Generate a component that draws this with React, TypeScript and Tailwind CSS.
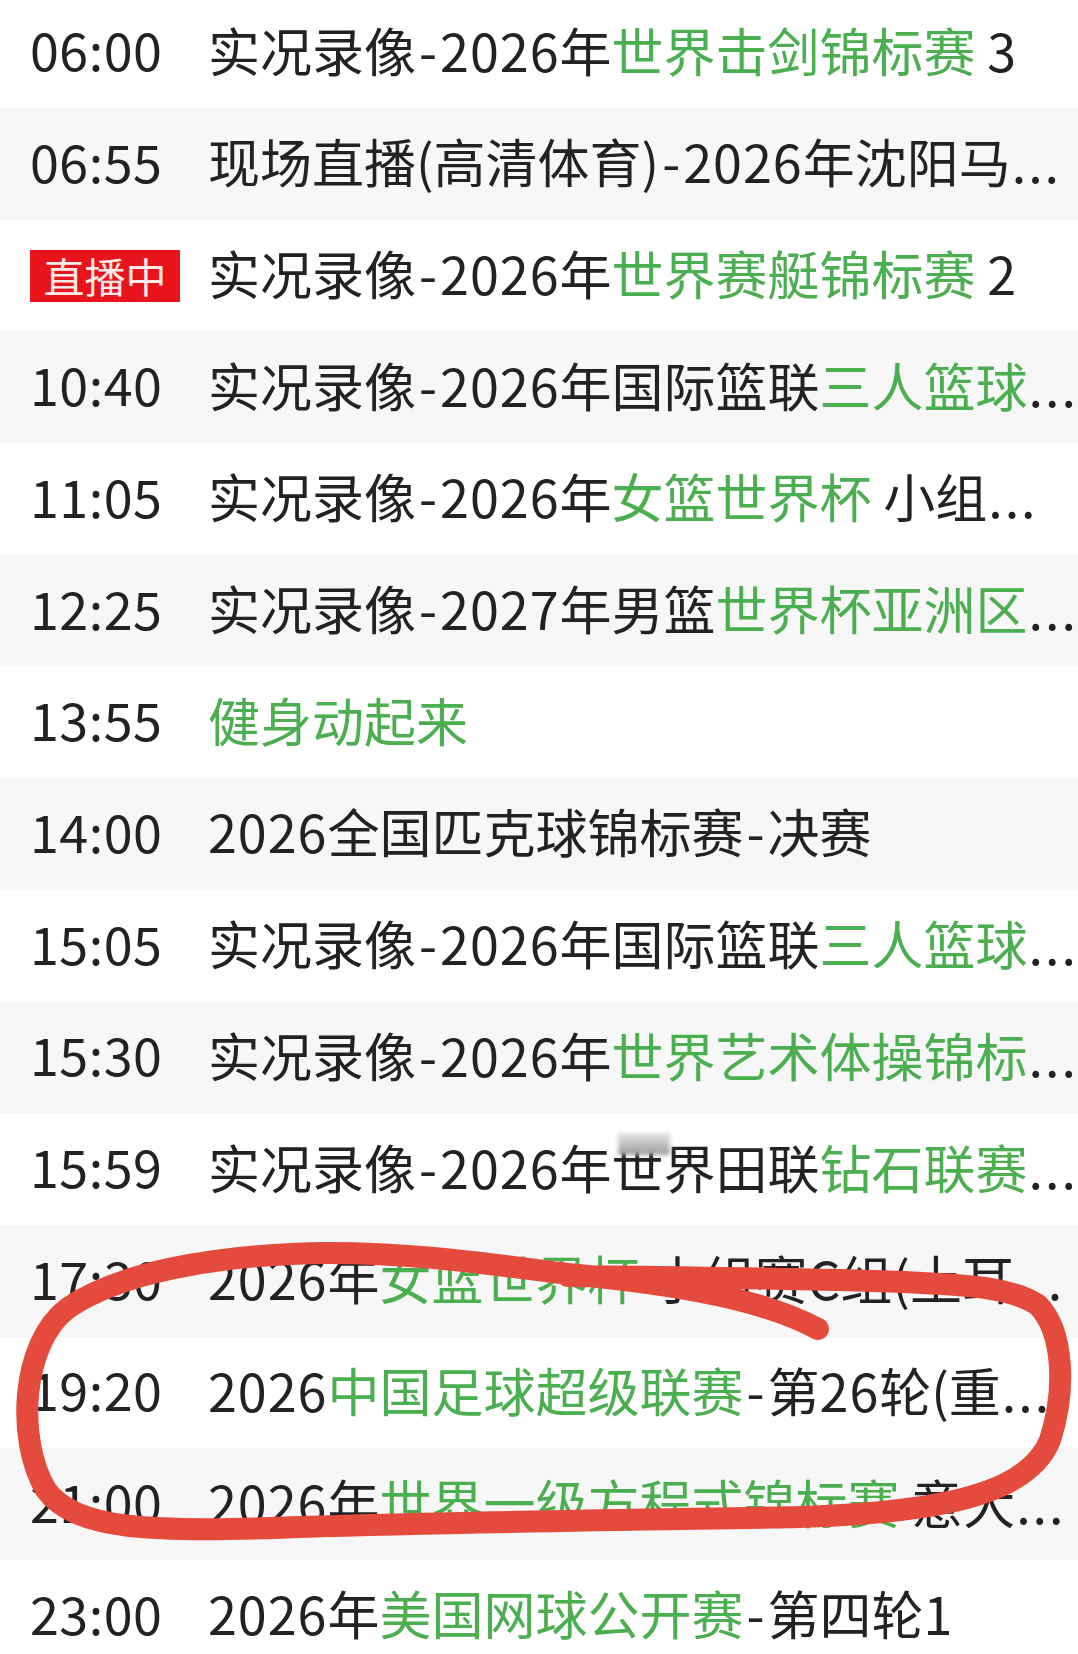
import clsx from "clsx";

type Seg = { t: string; g?: boolean };
type Row = { time?: string; live?: boolean; segs: Seg[]; more?: boolean };

const rows: Row[] = [
  { time: "06:00", segs: [{ t: "实况录像-2026年" }, { t: "世界击剑锦标赛", g: true }, { t: " 3" }] },
  { time: "06:55", segs: [{ t: "现场直播(高清体育)-2026年沈阳马" }], more: true },
  { live: true, segs: [{ t: "实况录像-2026年" }, { t: "世界赛艇锦标赛", g: true }, { t: " 2" }] },
  { time: "10:40", segs: [{ t: "实况录像-2026年国际篮联" }, { t: "三人篮球", g: true }], more: true },
  { time: "11:05", segs: [{ t: "实况录像-2026年" }, { t: "女篮世界杯", g: true }, { t: " 小组" }], more: true },
  { time: "12:25", segs: [{ t: "实况录像-2027年男篮" }, { t: "世界杯亚洲区", g: true }], more: true },
  { time: "13:55", segs: [{ t: "健身动起来", g: true }] },
  { time: "14:00", segs: [{ t: "2026全国匹克球锦标赛-决赛" }] },
  { time: "15:05", segs: [{ t: "实况录像-2026年国际篮联" }, { t: "三人篮球", g: true }], more: true },
  { time: "15:30", segs: [{ t: "实况录像-2026年" }, { t: "世界艺术体操锦标", g: true }], more: true },
  { time: "15:59", segs: [{ t: "实况录像-2026年世界田联" }, { t: "钻石联赛", g: true }], more: true },
  { time: "17:30", segs: [{ t: "2026年" }, { t: "女篮世界杯", g: true }, { t: " 小组赛C组(土耳" }], more: true },
  { time: "19:20", segs: [{ t: "2026" }, { t: "中国足球超级联赛", g: true }, { t: "-第26轮(重" }], more: true },
  { time: "21:00", segs: [{ t: "2026年" }, { t: "世界一级方程式锦标赛", g: true }, { t: " 意大" }], more: true },
  { time: "23:00", segs: [{ t: "2026年" }, { t: "美国网球公开赛", g: true }, { t: "-第四轮1" }] },
];

// the phone font sets digits and the hyphen a little wider than Noto does
function Spaced({ text }: { text: string }) {
  const parts = text.split(/(\d+|-)/).filter(Boolean);
  return (
    <>
      {parts.map((p, k) =>
        p === "-" ? (
          <span key={k} className="mx-[3px]">-</span>
        ) : /^\d+$/.test(p) ? (
          <span key={k} className="tracking-[1px]">{p}</span>
        ) : (
          <span key={k}>{p}</span>
        )
      )}
    </>
  );
}

export default function App() {
  return (
    <div className="relative h-[1654px] w-[1078px] overflow-hidden bg-white font-['Noto_Sans_CJK_SC',sans-serif] text-[#222]">
      {rows.map((r, i) => (
        <div
          key={i}
          className={clsx(
            "flex items-center",
            i === 0 ? "h-[108px] pb-[9px]" : "h-[111.7px] pb-[5px]",
            i % 2 ? "bg-[#f7f7f7]" : "bg-white"
          )}
        >
          <div className="w-[208px] shrink-0 pl-[30px]">
            {r.live ? (
              <span className="mt-[5px] flex h-[52px] w-[150px] items-center justify-center bg-[#e8131b] text-[41px] leading-none text-[#ffeaea]">
                直播中
              </span>
            ) : (
              <span className="text-[52px] leading-none tracking-[0.5px]">{r.time}</span>
            )}
          </div>
          <div className="min-w-0 flex-1 whitespace-nowrap text-[52px] leading-none">
            {r.segs.map((s, j) => (
              <span key={j} className={s.g ? "text-[#4bae4f]" : undefined}>
                <Spaced text={s.t} />
              </span>
            ))}
            {r.more && <span className="ml-[1px] tracking-[2px]">...</span>}
          </div>
        </div>
      ))}

      {/* blurred smudge sitting on top of 世 in the 15:59 row */}
      <div className="pointer-events-none absolute left-[618px] top-[1133px] h-[22px] w-[52px] bg-linear-to-b from-[#e6e6e6] to-[#9c9c9c] blur-[2px]" />

      {/* hand-drawn red loop around the 19:20 match */}
      <svg
        className="pointer-events-none absolute inset-0"
        width="1078"
        height="1654"
        viewBox="0 0 1078 1654"
        fill="none"
      >
        <path
          d="M818 1329 C768 1302 688 1285 568 1274 C488 1264 410 1252 320 1253 C215 1255 118 1273 68 1308 C21 1343 16 1440 46 1490 C76 1530 150 1533 300 1527 C500 1521 700 1519 800 1517 C955 1512 1030 1490 1050 1440 C1066 1390 1064 1332 1038 1305 C1010 1287 968 1285 904 1282 C784 1278 664 1277 568 1276"
          stroke="#e54b3c"
          strokeWidth="22"
          strokeLinecap="round"
          strokeLinejoin="round"
        />
      </svg>
    </div>
  );
}
